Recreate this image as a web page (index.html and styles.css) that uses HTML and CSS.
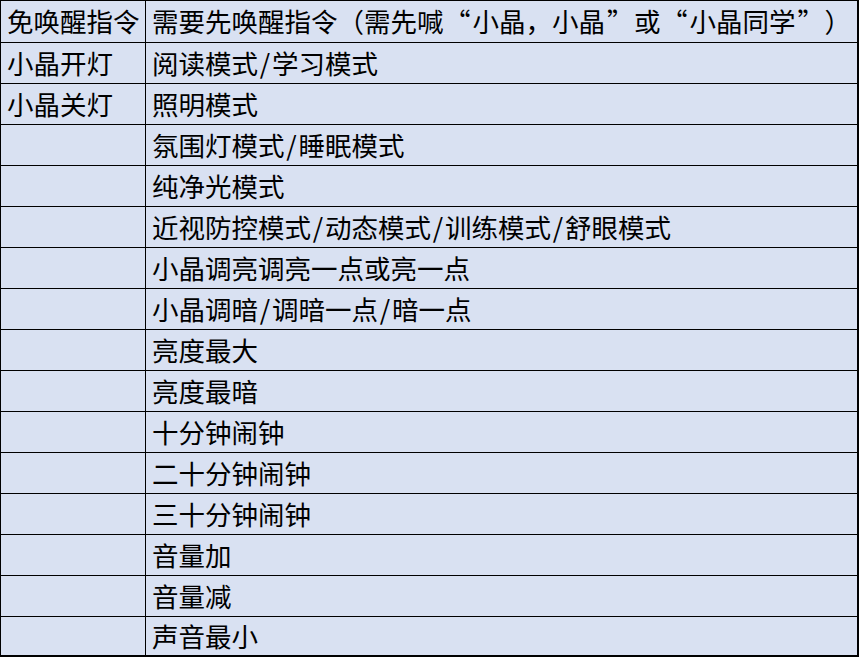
FILE: index.html
```html
<!DOCTYPE html>
<html lang="zh-CN">
<head>
<meta charset="utf-8">
<title>指令表</title>
<link rel="stylesheet" href="styles.css">
</head>
<body>
<div class="sheet">
  <div class="cell key">免唤醒指令</div><div class="cell cmd">需要先唤醒指令（需先喊<span class="q open">“</span>小晶，小晶<span class="q close">”</span>或<span class="q open">“</span>小晶同学<span class="q close">”</span>）</div>
  <div class="cell key">小晶开灯</div><div class="cell cmd">阅读模式<span class="sl">/</span>学习模式</div>
  <div class="cell key">小晶关灯</div><div class="cell cmd">照明模式</div>
  <div class="cell key"></div><div class="cell cmd">氛围灯模式<span class="sl">/</span>睡眠模式</div>
  <div class="cell key"></div><div class="cell cmd">纯净光模式</div>
  <div class="cell key"></div><div class="cell cmd">近视防控模式<span class="sl">/</span>动态模式<span class="sl">/</span>训练模式<span class="sl">/</span>舒眼模式</div>
  <div class="cell key"></div><div class="cell cmd">小晶调亮调亮一点或亮一点</div>
  <div class="cell key"></div><div class="cell cmd">小晶调暗<span class="sl">/</span>调暗一点<span class="sl">/</span>暗一点</div>
  <div class="cell key"></div><div class="cell cmd">亮度最大</div>
  <div class="cell key"></div><div class="cell cmd">亮度最暗</div>
  <div class="cell key"></div><div class="cell cmd">十分钟闹钟</div>
  <div class="cell key"></div><div class="cell cmd">二十分钟闹钟</div>
  <div class="cell key"></div><div class="cell cmd">三十分钟闹钟</div>
  <div class="cell key"></div><div class="cell cmd">音量加</div>
  <div class="cell key"></div><div class="cell cmd">音量减</div>
  <div class="cell key"></div><div class="cell cmd">声音最小</div>
</div>
</body>
</html>
```
FILE: styles.css
```css
html, body {
  margin: 0;
  padding: 0;
  background: #ffffff;
}

.sheet {
  width: 859px;
  height: 657px;
  box-sizing: border-box;
  background: #d9e1f2;
  border-top: 1px solid #000;
  border-left: 1px solid #000;
  border-right: 2px solid #000;
  border-bottom: 2px solid #000;
  display: grid;
  grid-template-columns: 145px 1fr;
  grid-template-rows: repeat(15, 41px) 39px;
  font-family: "Noto Sans CJK SC", "Noto Sans", sans-serif;
  font-size: 26.5px;
  color: #000;
}

.cell {
  box-sizing: border-box;
  border-top: 1px solid #000;
  display: flex;
  align-items: center;
  white-space: nowrap;
  overflow: hidden;
  line-height: 1;
}

.cell:nth-child(1),
.cell:nth-child(2) {
  border-top: none;
}

.key {
  border-right: 1px solid #000;
  padding-left: 6px;
}

.cmd {
  padding-left: 6px;
}

.q {
  display: inline-block;
  width: 29px;
}

.q.open {
  text-align: right;
  padding-right: 2px;
  box-sizing: border-box;
}

.q.close {
  text-align: left;
  padding-left: 2px;
  box-sizing: border-box;
}

.sl {
  display: inline-block;
  width: 14px;
  text-align: center;
}
```
